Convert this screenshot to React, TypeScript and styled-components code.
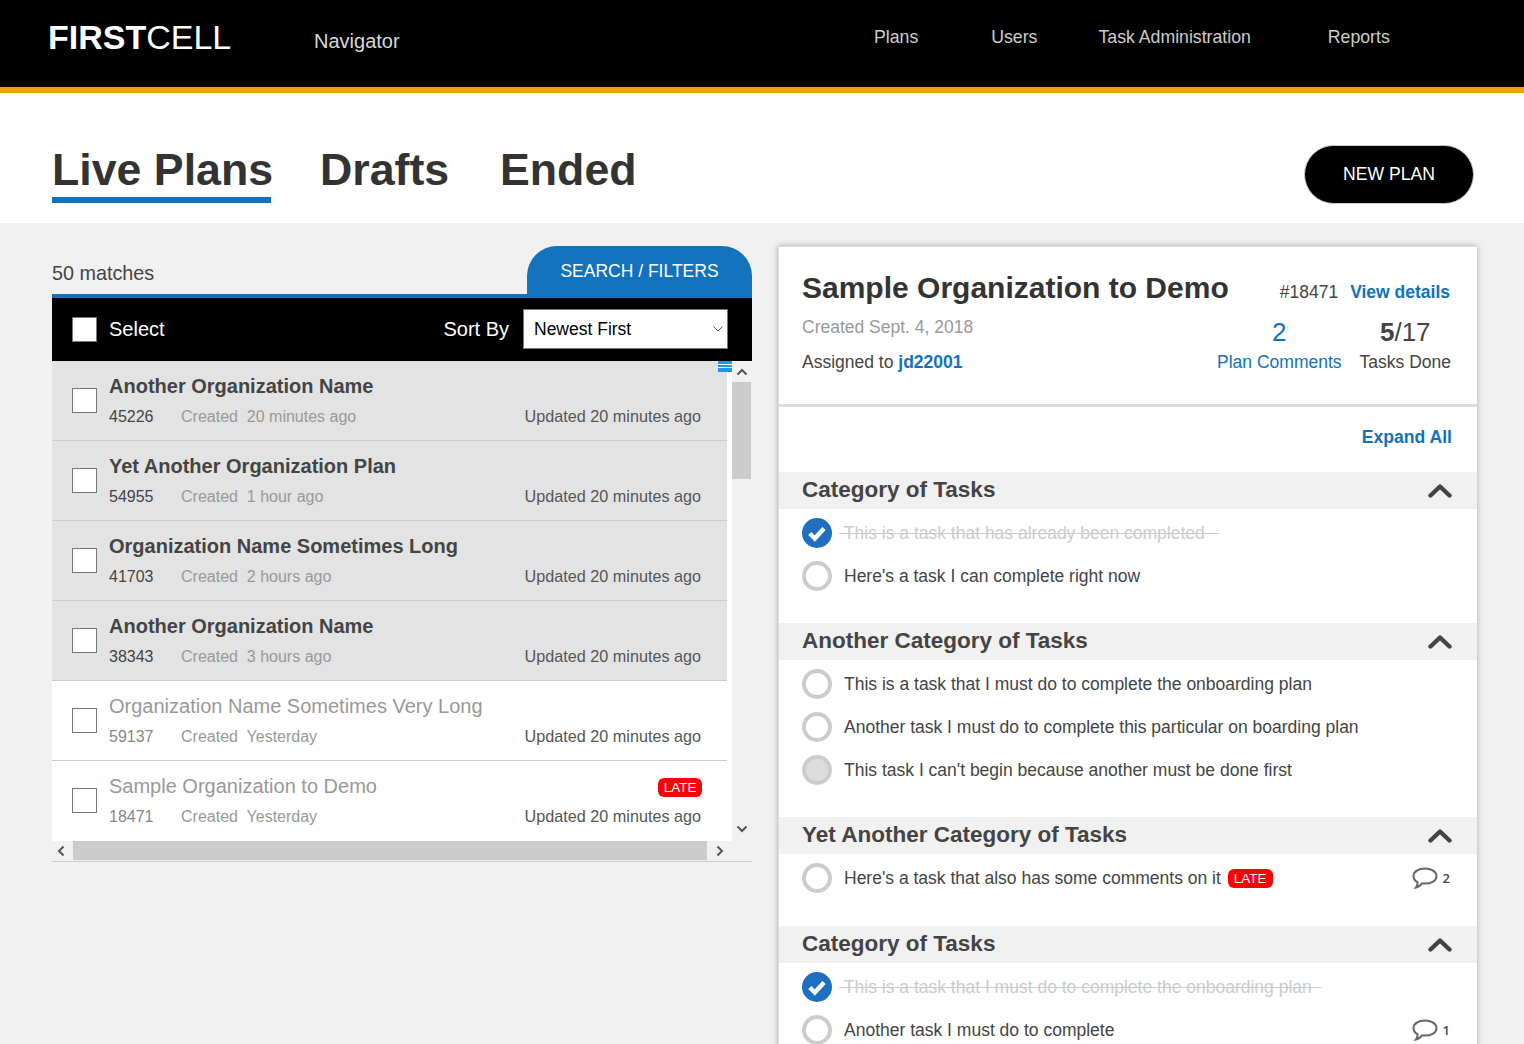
import React from "react";
import styled, { createGlobalStyle } from "styled-components";

const Global = createGlobalStyle`
  html, body { margin: 0; padding: 0; height: 1044px; overflow: hidden; background: #f1f1f1; }
  body { font-family: "Liberation Sans", Arial, sans-serif; color: #444; }
  * { box-sizing: border-box; }
`;

const Page = styled.div`display: flex; flex-direction: column; width: 1524px; height: 1044px; overflow: hidden;`;

const Header = styled.header`
  height: 93px; background: #000; border-bottom: 6px solid #eea100;
  display: flex; align-items: flex-start; flex: none;
`;
const Logo = styled.div`
  margin: 17px 0 0 48px; width: 266px; font-size: 34px; line-height: 40px; color: #fff;
  b { font-weight: 700; }
`;
const Product = styled.div`margin-top: 29px; width: 560px; font-size: 20px; line-height: 24px; color: #d8d8d8;`;
const NavLink = styled.a<{ $gap: number }>`
  margin-top: 27px; margin-left: ${p => p.$gap}px; font-size: 17.7px; line-height: 20px; color: #ccc;
`;

const TabBar = styled.div`
  height: 130px; background: #fff; display: flex; align-items: flex-start; padding-left: 52px; flex: none;
`;
const Tab = styled.div<{ $active?: boolean; $gap: number; $width: number }>`
  margin-top: 52px; margin-right: ${p => p.$gap}px; width: ${p => p.$width}px; height: 58px; white-space: nowrap;
  font-size: 44.7px; line-height: 50px; font-weight: 700; color: #333;
  border-bottom: 6px solid ${p => (p.$active ? "#1272bd" : "transparent")};
`;
const NewPlan = styled.button`
  margin: 52px 0 0 669px; width: 170px; height: 59px; border-radius: 30px; background: #000; color: #fff; border: 1px solid #ccc;
  font: 17.6px "Liberation Sans", Arial, sans-serif;
`;

const Main = styled.main`display: flex; align-items: flex-start; padding: 23px 0 0 52px; gap: 26px; flex: 1; min-height: 0;`;
const Left = styled.section`width: 700px; flex: none;`;
const TopRow = styled.div`height: 52px; display: flex; justify-content: space-between; align-items: flex-end; border-bottom: 4px solid #1272bd;`;
const Matches = styled.div`font-size: 19.8px; line-height: 24px; color: #444; padding-bottom: 9px;`;
const SearchTab = styled.div`
  width: 225px; height: 52px; margin-bottom: -4px; background: #1272bd; color: #fff; font-size: 17.5px; line-height: 50px; text-align: center;
  border-radius: 30px 30px 0 0;
`;
const Toolbar = styled.div`height: 63px; background: #000; color: #fff; display: flex; align-items: center; padding: 0 24px 0 20px; font-size: 20px;`;
const Box = styled.span`
  width: 25px; height: 25px; flex: none; background: #fff; border: 1px solid #777; margin-right: 12px;
`;
const Spacer = styled.span`flex: 1;`;
const SelectWrap = styled.span`position: relative; display: block; width: 205px; height: 40px; margin: 0 0 1px 14px;`;
const SortSelect = styled.select`
  appearance: none; width: 100%; height: 100%; background: #fff; color: #000; border: 1px solid #777; border-radius: 0;
  padding-left: 10px; font: 17.5px "Liberation Sans", Arial, sans-serif;
`;
const SelectArrow = styled.svg`position: absolute; right: 5px; top: 16px; pointer-events: none;`;
const ListFrame = styled.div`
  display: grid; grid-template-columns: 680px 20px; grid-template-rows: 480px 20px; position: relative;
  border-bottom: 1px solid #ccc; height: 501px;
`;
const Rows = styled.div`background: #fff; padding-right: 5px; overflow: hidden;`;
const Row = styled.div<{ $shaded?: boolean }>`
  height: 80px; background: ${p => (p.$shaded ? "#e3e3e3" : "#fff")}; border-bottom: 1px solid #ccc; padding: 0 25px 0 20px;
  display: flex; align-items: center;
  &:last-child { border-bottom-color: transparent; }
`;
const RowBody = styled.div`flex: 1; min-width: 0;`;
const RowTop = styled.div`display: flex; justify-content: space-between; align-items: center; height: 26px; margin-bottom: 7px;`;
const RowTitle = styled.div<{ $shaded?: boolean }>`
  font-size: 20px; line-height: 26px; font-weight: ${p => (p.$shaded ? 700 : 400)}; color: ${p => (p.$shaded ? "#444" : "#999")};
`;
const RowMeta = styled.div`display: flex; font-size: 16px; line-height: 22px; color: #999;`;
const RowId = styled.span<{ $shaded?: boolean }>`width: 72px; color: ${p => (p.$shaded ? "#444" : "#888")};`;
const Updated = styled.span`margin: -1px 1px 0 auto; color: #555; font-size: 16.2px;`;
const Late = styled.span`
  display: inline-block; height: 19px; padding: 0 6px; border-radius: 6px; background: #f00; color: #fff; font-size: 13.5px; line-height: 19px;
`;
const RowLate = styled(Late)`margin-top: 2px; padding: 0 5.5px;`;
const Flag = styled.div`
  position: absolute; left: 666px; top: 0; width: 14px; height: 11px; background: #2196e3;
  border-top: 3px solid #2196e3; display: flex; flex-direction: column; gap: 2px;
  i { display: block; height: 1px; background: #fff; }
`;
const VScroll = styled.div`background: #f1f1f1; display: flex; flex-direction: column; align-items: stretch;`;
const ScrollBtn = styled.div<{ $w?: number; $h?: number; $pad?: string }>`
  height: ${p => p.$h ?? 20}px; display: flex; align-items: center; justify-content: center; flex: none;
  padding: ${p => p.$pad ?? "0"};
  ${p => (p.$w ? `width: ${p.$w}px;` : "")}
`;
const VThumb = styled.div`height: 97px; background: #ccc; margin-right: 1px; flex: none;`;
const Grow = styled.div`flex: 1;`;
const HScroll = styled.div`background: #f1f1f1; display: flex; align-items: stretch; height: 19px;`;
const HThumb = styled.div`flex: 1; background: #ccc;`;

const Panel = styled.section`
  width: 699px; flex: none; background: #fff; box-shadow: 0 0 6px rgba(0,0,0,.3); border-left: 1px solid #ddd; border-top: 1px solid #ddd; height: 1000px;
`;
const PanelHead = styled.div`height: 160px; border-bottom: 3px solid #ddd; padding: 23px 26px 0 23px; display: grid; grid-template-columns: minmax(0, 1fr) auto; grid-template-rows: 36px auto;`;
const Title = styled.h1`margin: 0; font-size: 30px; line-height: 36px; font-weight: 700; color: #333; white-space: nowrap;`;
const HeadRight = styled.div`font-size: 17.5px; display: flex; justify-content: flex-end; align-items: flex-end; padding: 0 1px 2px 0; line-height: 24px; color: #444; gap: 12px;`;
const LinkBold = styled.a`color: #1272bd; font-weight: 700;`;
const HeadMeta = styled.div`font-size: 17.5px; line-height: 24px; color: #999; padding-top: 9px;`;
const Assigned = styled.div`color: #444; margin-top: 11px;`;
const Stats = styled.div`display: flex; gap: 18px; padding-top: 11px; white-space: nowrap;`;
const Stat = styled.div`text-align: center; font-size: 17.5px; line-height: 24px;`;
const StatNum = styled.div<{ $blue?: boolean }>`font-size: 26px; line-height: 30px; margin-bottom: 3px; color: ${p => (p.$blue ? "#1272bd" : "#444")};`;
const StatLabel = styled.div<{ $blue?: boolean }>`color: ${p => (p.$blue ? "#1272bd" : "#444")};`;
const ExpandRow = styled.div`height: 65px; padding: 18px 25px 0 0; text-align: right; font-size: 17.6px; line-height: 24px;`;
const Section = styled.div<{ $pad?: number }>`padding-bottom: ${p => p.$pad ?? 25}px;`;
const CatHead = styled.div`
  height: 37px; background: #f1f1f1; display: flex; align-items: center; justify-content: space-between; padding: 0 25px 2px 23px; margin-bottom: 3px;
  font-size: 22.5px; line-height: 34px; font-weight: 700; color: #444;
`;
const ChevronIcon = styled.svg`margin-top: 2px;`;
const Task = styled.div`height: 43px; display: flex; align-items: center; padding: 0 25px 1px 23px; font-size: 17.5px; color: #444;`;
const Circle = styled.span<{ $blocked?: boolean }>`
  width: 30px; height: 30px; flex: none; border-radius: 50%; border: 4px solid #ccc; background: ${p => (p.$blocked ? "#ddd" : "#fff")};
  margin-right: 12px;
`;
const Done = styled.span`color: #ccc; text-decoration: line-through; margin-left: -5px; white-space: pre;`;
const TaskLate = styled(Late)`margin-left: 7px;`;
const CheckIcon = styled.svg`flex: none; margin-right: 12px;`;
const Comments = styled.span`margin-left: auto; display: flex; align-items: center; gap: 5px; font: 600 13px "Open Sans", sans-serif; color: #444; padding-right: 2px;`;

const Chevron = () => (
  <ChevronIcon width="24" height="15" viewBox="0 0 24 15"><path d="M2.500 12.500 12 3.500l9.500 9" fill="none" stroke="#444" strokeWidth="4.400" strokeLinecap="round" strokeLinejoin="round" /></ChevronIcon>
);
const Bubble = () => (
  <svg width="26" height="23" viewBox="0 0 26 23"><path d="M13 1.500c6.400 0 11.500 3.300 11.500 7.700S19.400 16.600 13 16.600c-1 0-2 0-3-.2-1.300 1.800-3.500 3.700-6 4.100 1-1.200 1.700-3.200 1.500-5.300C3 13.800 1.500 11.700 1.500 9.200 1.500 4.800 6.600 1.500 13 1.500z" fill="#fff" stroke="#666" strokeWidth="2" /></svg>
);
const Check = () => (
  <CheckIcon width="30" height="30" viewBox="0 0 30 30">
    <circle cx="15" cy="15" r="15" fill="#1f6fc0" />
    <path d="M7.800 15.500l5 5 9.200-10" fill="none" stroke="#fff" strokeWidth="4.400" strokeLinejoin="miter" />
  </CheckIcon>
);
const Arrow = ({ d }: { d: string }) => (
  <svg width="12" height="12" viewBox="0 0 12 12"><path d={d} fill="none" stroke="#555" strokeWidth="2" /></svg>
);

const rows = [
  { title: "Another Organization Name", id: "45226", created: "20 minutes ago", shaded: true },
  { title: "Yet Another Organization Plan", id: "54955", created: "1 hour ago", shaded: true },
  { title: "Organization Name Sometimes Long", id: "41703", created: "2 hours ago", shaded: true },
  { title: "Another Organization Name", id: "38343", created: "3 hours ago", shaded: true },
  { title: "Organization Name Sometimes Very Long", id: "59137", created: "Yesterday", shaded: false },
  { title: "Sample Organization to Demo", id: "18471", created: "Yesterday", shaded: false, late: true },
];

export default function App() {
  return (
    <Page>
      <Global />
      <Header>
        <Logo><b>FIRST</b>CELL</Logo>
        <Product>Navigator</Product>
        <NavLink $gap={0}>Plans</NavLink>
        <NavLink $gap={73}>Users</NavLink>
        <NavLink $gap={61}>Task Administration</NavLink>
        <NavLink $gap={77}>Reports</NavLink>
      </Header>
      <TabBar>
        <Tab $active $gap={49} $width={219}>Live Plans</Tab>
        <Tab $gap={52} $width={128}>Drafts</Tab>
        <Tab $gap={0} $width={135}>Ended</Tab>
        <NewPlan>NEW PLAN</NewPlan>
      </TabBar>
      <Main>
        <Left>
          <TopRow>
            <Matches>50 matches</Matches>
            <SearchTab>SEARCH / FILTERS</SearchTab>
          </TopRow>
          <Toolbar>
            <Box />
            Select
            <Spacer />
            Sort By
            <SelectWrap>
              <SortSelect defaultValue="Newest First"><option>Newest First</option></SortSelect>
              <SelectArrow width="10" height="8" viewBox="0 0 10 8"><path d="M.5 1.500 5 6l4.500-4.500" fill="none" stroke="#555" strokeWidth="1" /></SelectArrow>
            </SelectWrap>
          </Toolbar>
          <ListFrame>
            <Rows>
              {rows.map(r => (
                <Row key={r.id} $shaded={r.shaded}>
                  <Box />
                  <RowBody>
                    <RowTop>
                      <RowTitle $shaded={r.shaded}>{r.title}</RowTitle>
                      {r.late && <RowLate>LATE</RowLate>}
                    </RowTop>
                    <RowMeta>
                      <RowId $shaded={r.shaded}>{r.id}</RowId>
                      <span>Created&nbsp; {r.created}</span>
                      <Updated>Updated 20 minutes ago</Updated>
                    </RowMeta>
                  </RowBody>
                </Row>
              ))}
            </Rows>
            <VScroll>
              <ScrollBtn $h={21}><Arrow d="M1.500 8.500 6 4l4.500 4.500" /></ScrollBtn>
              <VThumb />
              <Grow />
              <ScrollBtn $pad="0 0 5px"><Arrow d="M1.500 3.500 6 8l4.500-4.500" /></ScrollBtn>
            </VScroll>
            <HScroll>
              <ScrollBtn $w={21} $h={19} $pad="0 3px 0 0"><Arrow d="M8.500 1.500 4 6l4.500 4.500" /></ScrollBtn>
              <HThumb />
              <ScrollBtn $w={25} $h={19}><Arrow d="M3.500 1.500 8 6l-4.500 4.500" /></ScrollBtn>
            </HScroll>
            <Flag><i /><i /></Flag>
          </ListFrame>
        </Left>
        <Panel>
          <PanelHead>
            <Title>Sample Organization to Demo</Title>
            <HeadRight><span>#18471</span><LinkBold>View details</LinkBold></HeadRight>
            <HeadMeta>
              Created Sept. 4, 2018
              <Assigned>Assigned to <LinkBold>jd22001</LinkBold></Assigned>
            </HeadMeta>
            <Stats>
              <Stat><StatNum $blue>2</StatNum><StatLabel $blue>Plan Comments</StatLabel></Stat>
              <Stat><StatNum><b>5</b>/17</StatNum><StatLabel>Tasks Done</StatLabel></Stat>
            </Stats>
          </PanelHead>
          <ExpandRow><LinkBold>Expand All</LinkBold></ExpandRow>
          <Section>
            <CatHead>Category of Tasks<Chevron /></CatHead>
            <Task><Check /><Done>{"\u00a0This is a task that has already been completed\u00a0\u00a0\u00a0"}</Done></Task>
            <Task><Circle />Here's a task I can complete right now</Task>
          </Section>
          <Section>
            <CatHead>Another Category of Tasks<Chevron /></CatHead>
            <Task><Circle />This is a task that I must do to complete the onboarding plan</Task>
            <Task><Circle />Another task I must do to complete this particular on boarding plan</Task>
            <Task><Circle $blocked />This task I can't begin because another must be done first</Task>
          </Section>
          <Section $pad={26}>
            <CatHead>Yet Another Category of Tasks<Chevron /></CatHead>
            <Task><Circle />Here's a task that also has some comments on it<TaskLate>LATE</TaskLate><Comments><Bubble />2</Comments></Task>
          </Section>
          <Section>
            <CatHead>Category of Tasks<Chevron /></CatHead>
            <Task><Check /><Done>{"\u00a0This is a task that I must do to complete the onboarding plan\u00a0\u00a0"}</Done></Task>
            <Task><Circle />Another task I must do to complete<Comments><Bubble />1</Comments></Task>
          </Section>
        </Panel>
      </Main>
    </Page>
  );
}
